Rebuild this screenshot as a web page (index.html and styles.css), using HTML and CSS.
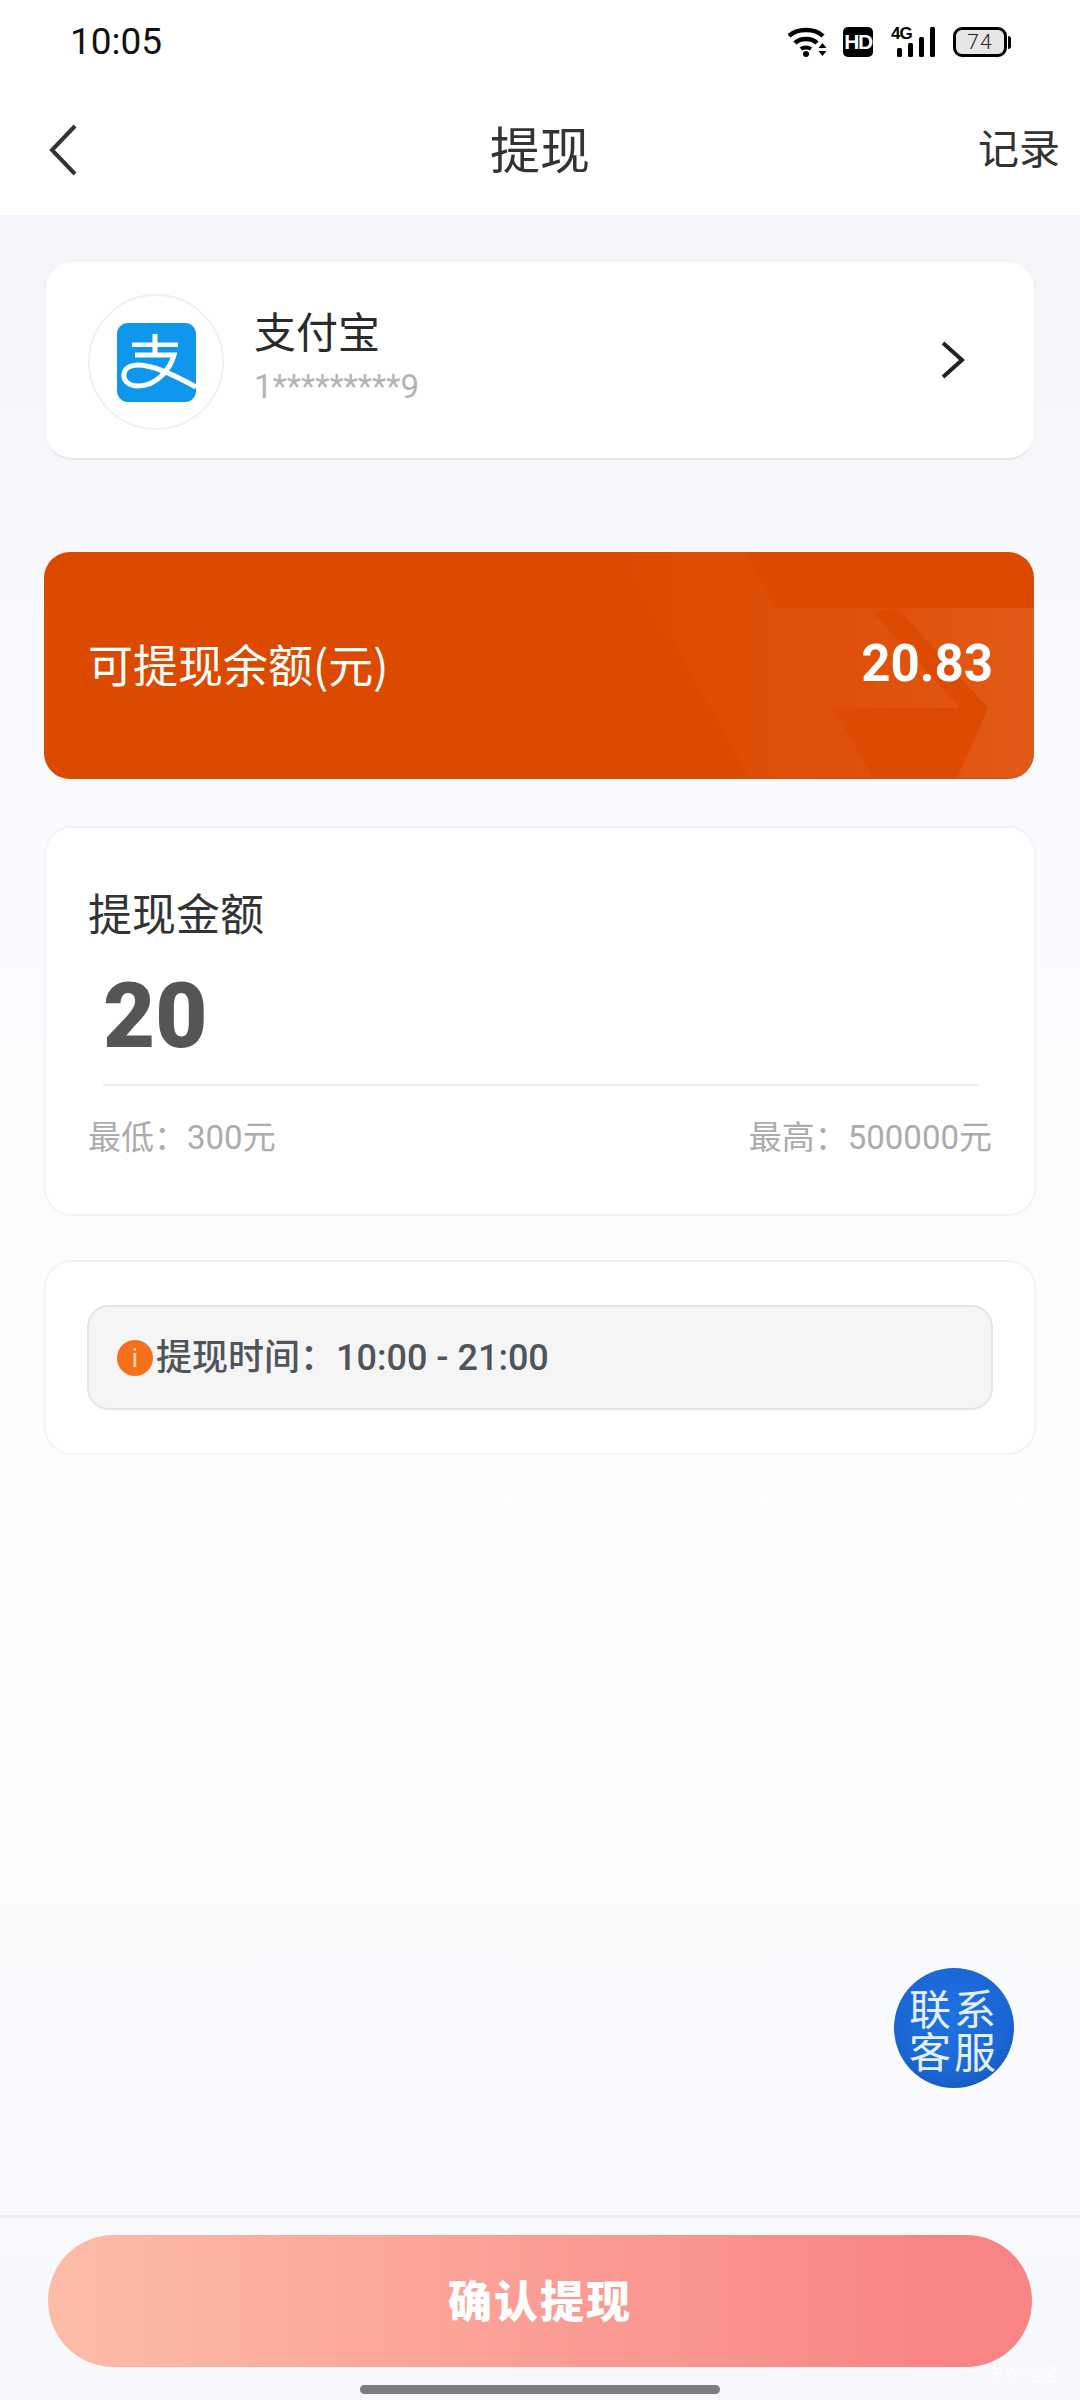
FILE: index.html
```html
<!DOCTYPE html>
<html lang="zh-CN">
<head>
<meta charset="utf-8">
<title>提现</title>
<link rel="stylesheet" href="styles.css">
</head>
<body>
<div class="page">
  <header class="top">
    <div class="status">
      <span class="time">10:05</span>
      <div class="status-icons">
        <svg class="ic-wifi" width="40" height="30" viewBox="0 0 40 30"><path d="M1 9C9 1 27 1 35 9" fill="none" stroke="#000" stroke-width="4.500"/><path d="M7 16C12 10.500 24 10.500 29 16" fill="none" stroke="#000" stroke-width="4.500"/><path d="M13 22C15.500 20 20.500 20 23 22" fill="none" stroke="#000" stroke-width="4"/><circle cx="18" cy="27" r="3" fill="#000"/><path d="M30.500 21l4-5 4 5zM30.500 24h8l-4 5z" fill="#000"/></svg>
        <span class="ic-hd">HD</span>
        <span class="ic-signal"><span class="net">4G</span>
          <svg width="44" height="30" viewBox="0 0 44 30"><rect x="6" y="21" width="5" height="9" rx="1.500"/><rect x="17" y="16" width="5" height="14" rx="1.500"/><rect x="28" y="10" width="5" height="20" rx="1.500"/><rect x="39" y="0" width="5" height="30" rx="1.500"/></svg>
        </span>
        <span class="ic-batt"><span class="batt-body">74</span><span class="batt-nub"></span></span>
      </div>
    </div>
    <nav class="nav">
      <svg class="back" width="30" height="52" viewBox="0 0 30 52"><path d="M27 2 4 26l23 24" fill="none" stroke="#333" stroke-width="4"/></svg>
      <h1 class="title">提现</h1>
      <span class="record">记录</span>
    </nav>
  </header>

  <main class="content">
    <section class="card pay">
      <div class="logo-ring">
        <svg width="79" height="79" viewBox="0 0 79 79"><rect width="79" height="79" rx="11" fill="#0f97ee"/><g fill="none" stroke="#fff"><path d="M38 11V31" stroke-width="5"/><path d="M15 21.700H61" stroke-width="4.500"/><path d="M18 32H57C53 46 40 63 21 63C11 63 6 57 7 51C8 42 20 40 34 44C50 48 66 57 79 64" stroke-width="5"/></g></svg>
      </div>
      <div class="pay-text">
        <div class="pay-name">支付宝</div>
        <div class="pay-acct">1*********9</div>
      </div>
      <svg class="pay-arrow" width="26" height="38" viewBox="0 0 26 38"><path d="M3 2l19 17L3 36" fill="none" stroke="#222" stroke-width="4"/></svg>
    </section>

    <section class="balance">
      <svg class="balance-art" width="990" height="226" viewBox="0 0 990 226">
        <defs><linearGradient id="bandFill" x1="590" y1="0" x2="990" y2="0" gradientUnits="userSpaceOnUse"><stop offset="0" stop-color="#dc4b01"/><stop offset=".4" stop-color="#de4f07"/><stop offset=".7" stop-color="#df530d"/><stop offset="1" stop-color="#e25a18"/></linearGradient></defs>
        <path d="M596 0H701L731 56H990V226H706L591 22Z" fill="url(#bandFill)"/>
        <path d="M829 60L853 56L944 156L913 226H829L789 156H916Z" fill="#dd4b03"/>
      </svg>
      <span class="balance-label">可提现余额(元)</span>
      <span class="balance-value">20.83</span>
    </section>

    <section class="card amount">
      <div class="amount-label">提现金额</div>
      <div class="amount-value">20</div>
      <div class="amount-limits">
        <span>最低：300元</span>
        <span>最高：500000元</span>
      </div>
    </section>

    <section class="card notice">
      <div class="notice-box">
        <span class="notice-icon">i</span>
        <span class="notice-text">提现时间：10:00 - 21:00</span>
      </div>
    </section>

    <div class="service-row">
      <div class="service"><span class="service-line">联系</span><span class="service-line">客服</span></div>
    </div>
  </main>

  <footer class="footer">
    <button class="confirm" type="button">确认提现</button>
    <span class="watermark">卡农社区</span>
    <div class="home-bar"></div>
  </footer>
</div>
</body>
</html>
```

FILE: styles.css
```css
* { box-sizing: border-box; }
html, body { margin: 0; padding: 0; }
body { width: 1080px; height: 2400px; overflow: hidden; font-family: Roboto, "Noto Sans CJK SC", sans-serif; }
.page { width: 1080px; height: 2400px; display: flex; flex-direction: column; background: linear-gradient(180deg, #f4f5f9 215px, #f9fafe 700px, #fdfdfe 1500px, #f9fafd 2100px, #f7f8fc 2400px); position: relative; }

.top { height: 215px; background: #fff; flex: none; }
.status { height: 84px; display: flex; align-items: center; justify-content: space-between; padding: 0 69px 0 70px; }
.time { font-size: 37px; color: #111; line-height: 84px; }
.status-icons { display: flex; align-items: center; height: 30px; }
.ic-wifi { margin-right: 15px; }
.ic-hd { width: 30px; height: 30px; border-radius: 5px; background: #000; color: #fff; font: 700 21px/30px "Liberation Sans", sans-serif; text-align: center; letter-spacing: -1.500px; margin-right: 18px; }
.ic-signal { position: relative; width: 44px; height: 30px; display: block; margin-right: 18px; }
.ic-signal svg { display: block; }
.net { position: absolute; left: 0; top: -2px; font: 700 17px/17px "Liberation Sans", sans-serif; color: #000; letter-spacing: -1px; }
.ic-batt { display: flex; align-items: center; }
.batt-body { width: 54px; height: 30px; border: 3px solid #000; border-radius: 9px; background: #e6e6e6; font: 300 21px/24px Roboto, sans-serif; color: #222; text-align: center; letter-spacing: 1px; }
.batt-nub { width: 3px; height: 13px; margin-left: 1px; border-radius: 0 3px 3px 0; background: #000; }

.nav { height: 131px; position: relative; display: flex; align-items: center; justify-content: space-between; padding: 0 20px 0 48px; }
.back { display: block; }
.title { position: absolute; left: 0; right: 0; top: 33px; margin: 0; text-align: center; font: 400 50px/60px "Noto Sans CJK SC", sans-serif; color: #333; }
.record { font: 400 41px/60px "Noto Sans CJK SC", sans-serif; color: #333; margin-top: -8px; }

.content { flex: 1; padding: 45px 44px 0; display: flex; flex-direction: column; min-height: 0; }
.card { background: #fff; border: 2px solid #f2f3f6; border-radius: 28px; }

.pay { height: 200px; display: flex; align-items: center; padding: 4px 42px 0; border-bottom-color: #e7e8ec; flex: none; }
.logo-ring { width: 136px; height: 136px; border-radius: 50%; border: 2px solid #f0f0f2; display: flex; align-items: center; justify-content: center; flex: none; }
.logo-ring svg { display: block; }
.pay-text { margin-left: 30px; flex: 1; }
.pay-name { font: 400 42px/50px "Noto Sans CJK SC", sans-serif; color: #2a2a2a; margin-top: -12px; }
.pay-acct { font: 400 33px/40px Roboto, sans-serif; color: #b4b4b4; margin-top: 12px; }
.pay-arrow { margin-right: 26px; margin-top: -4px; }

.balance { height: 227px; width: 990px; margin-top: 92px; border-radius: 26px; background: #dc4a00; display: flex; align-items: center; justify-content: space-between; padding: 0 41px 0 44px; position: relative; overflow: hidden; flex: none; }
.balance-art { position: absolute; left: 0; top: 0; }
.balance-label { position: relative; font: 400 45px/60px "Noto Sans CJK SC", sans-serif; color: #fff; margin-top: -3px; }
.balance-value { position: relative; font: 700 51px/60px Roboto, sans-serif; color: #fff; margin-top: -4px; }

.amount { height: 390px; margin-top: 47px; padding: 53px 42px 0; flex: none; }
.amount-label { font: 400 44px/62px "Noto Sans CJK SC", sans-serif; color: #333; }
.amount-value { margin: 10px 15px 0; font: 900 90px/104px Roboto, sans-serif; color: #555; height: 133px; padding-top: 12px; border-bottom: 2px solid #ececf0; width: 876px; }
.amount-limits { display: flex; justify-content: space-between; margin-top: 30px; font: 400 33px/44px Roboto, "Noto Sans CJK SC", sans-serif; color: #acacac; }

.notice { height: 195px; margin-top: 44px; padding: 43px 41px; flex: none; }
.notice-box { height: 105px; border: 2px solid #e3e4e6; border-radius: 22px; background: #f5f5f6; display: flex; align-items: center; padding-left: 28px; }
.notice-icon { width: 36px; height: 36px; border-radius: 50%; background: #f5701c; color: #ffd9bd; font: 400 26px/36px Roboto, sans-serif; text-align: center; flex: none; margin-right: 3px; }
.notice-text { font: 500 36px/50px Roboto, "Noto Sans CJK SC", sans-serif; color: #50555c; }

.service-row { flex: 1; display: flex; justify-content: flex-end; padding-top: 513px; padding-right: 22px; }
.service { width: 120px; height: 120px; border-radius: 50%; background: radial-gradient(circle at 48% 42%, #1f72e2 0%, #1a66d4 60%, #1552b6 88%, #0a2f78 100%); color: #e4f0ff; font: 400 42px/43px "Noto Sans CJK SC", sans-serif; letter-spacing: 3px; text-align: center; padding-top: 17px; white-space: nowrap; }
.service-line { display: block; }

.footer { height: 185px; border-top: 3px solid #eceef2; padding: 17px 48px 0; position: relative; flex: none; }
.confirm { display: block; width: 984px; height: 132px; border: 0; border-radius: 66px; background: linear-gradient(90deg, #fdbca8 0%, #f98484 92%); color: #fff; font: 900 44px/60px "Noto Sans CJK SC", sans-serif; letter-spacing: 2px; padding: 0 0 5px; }
.watermark { position: absolute; right: 22px; top: 144px; font: 400 18px/22px "Noto Sans CJK SC", sans-serif; color: #fff; opacity: .8; }
.home-bar { width: 360px; height: 9px; border-radius: 5px; background: #7b7c80; margin: 18px auto 0; }
```
